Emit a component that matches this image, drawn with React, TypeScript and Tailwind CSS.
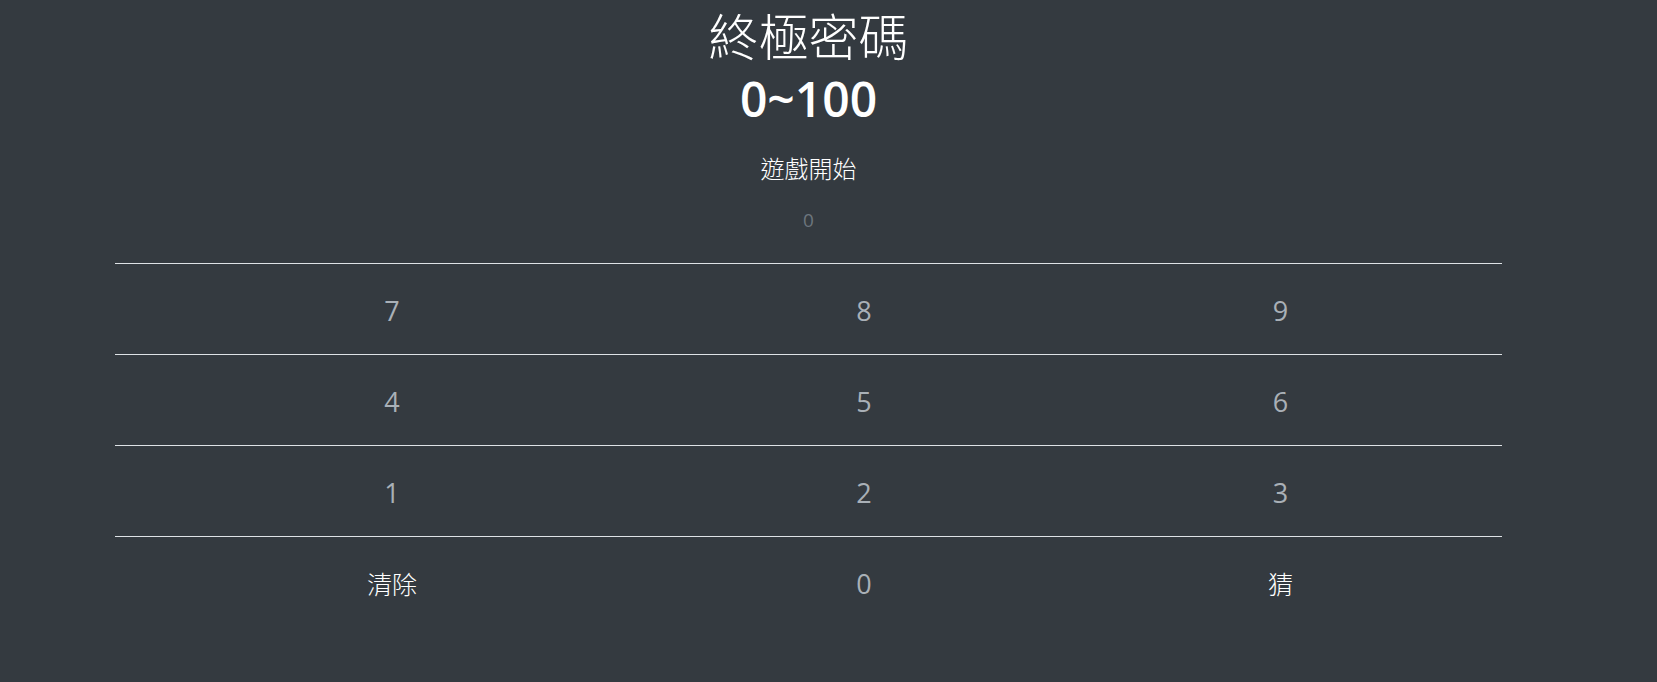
import React, { useState } from "react";

const keys = [
  ["7", "8", "9"],
  ["4", "5", "6"],
  ["1", "2", "3"],
  ["清除", "0", "猜"],
];

const cjk = "font-['Noto_Sans_CJK_TC','Noto_Sans',sans-serif]";

export default function App() {
  const [guess, setGuess] = useState("");

  const press = (k: string) => {
    if (k === "清除") setGuess("");
    else if (k === "猜") return;
    else setGuess((g) => (g + k).slice(0, 3));
  };

  return (
    <div className="min-h-[682px] w-full bg-[#343a40] font-['Open_Sans','Noto_Sans_CJK_TC',sans-serif]">
      <div className="ml-[115px] w-[1387px] flex flex-col items-center">
        {/* Header */}
        <h1 className={`${cjk} font-light text-[50px] leading-[68px] text-white`}>終極密碼</h1>
        <h2 className="mt-[2px] text-[48px] leading-[58px] font-semibold text-white">0~100</h2>
        <p className={`${cjk} mt-[22px] font-light text-[24px] leading-[35px] text-white`}>遊戲開始</p>
        <input
          value={guess}
          readOnly
          placeholder="0"
          className="mt-[15px] h-[40px] w-[300px] bg-transparent text-center text-[19px] text-[#ced4da] placeholder:text-[#6c757d] outline-none"
        />

        {/* Keypad */}
        <div className="mt-[23px] w-full">
          {keys.map((row, i) => (
            <div
              key={i}
              className="grid grid-cols-[554px_390px_443px] h-[91px] pt-1 border-t border-[#dee2e6]"
            >
              {row.map((k) => {
                const isWord = k === "清除" || k === "猜";
                return (
                  <button
                    key={k}
                    onClick={() => press(k)}
                    className={
                      isWord
                        ? `${cjk} font-light text-[25px] text-white`
                        : "text-[27px] text-[#a9b0b7]"
                    }
                  >
                    {k}
                  </button>
                );
              })}
            </div>
          ))}
        </div>
      </div>
    </div>
  );
}
